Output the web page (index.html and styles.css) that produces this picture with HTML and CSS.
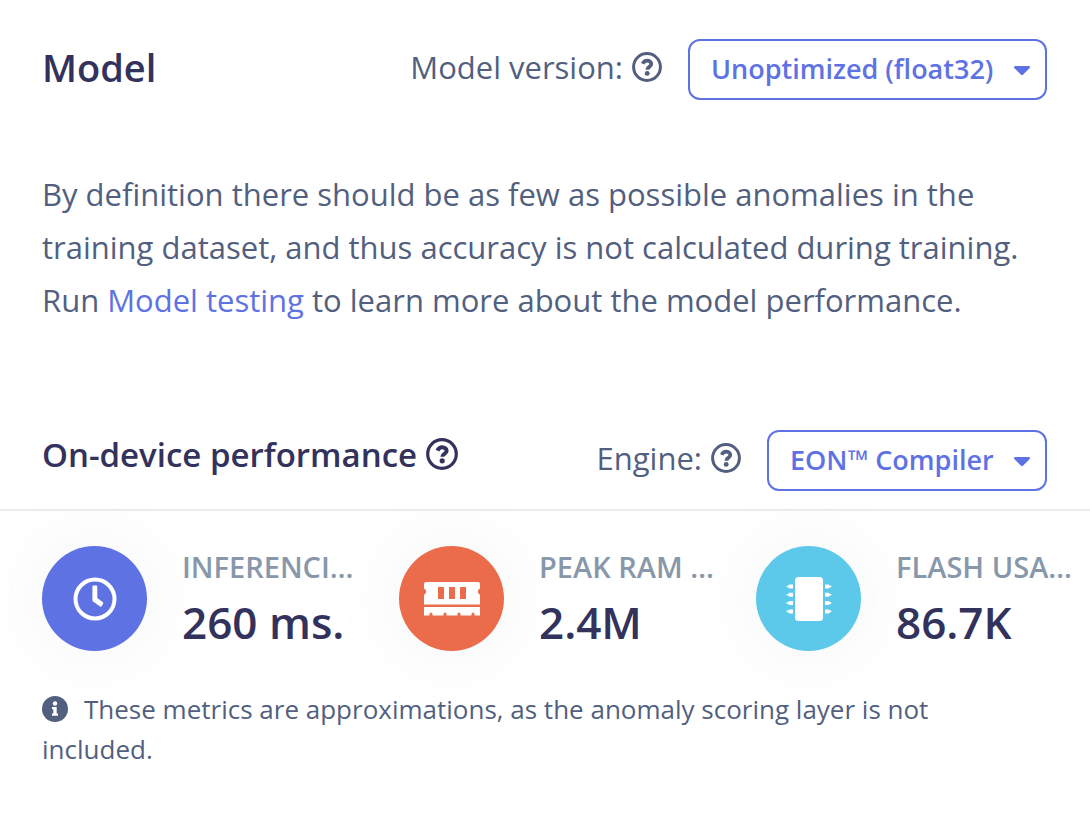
FILE: index.html
```html
<!DOCTYPE html>
<html lang="en">
<head>
  <meta charset="UTF-8" />
  <meta name="viewport" content="width=device-width, initial-scale=1.0"/>
  <title>Model</title>
  <link rel="stylesheet" href="styles.css">
</head>
<body>
  <svg class="defs" width="0" height="0" aria-hidden="true">
    <symbol id="question" viewBox="0 0 32 32">
      <circle cx="16" cy="16" r="14.3" fill="none" stroke="currentColor" stroke-width="3.2"/>
      <path d="M11.4 12.6C12.5 10.2 14 9.2 16.2 9.2C18.8 9.2 20.6 10.8 20.6 12.9C20.6 16 16.3 15.8 16.3 18.8" fill="none" stroke="currentColor" stroke-width="4"/>
      <circle cx="16.2" cy="22.8" r="2.6" fill="currentColor"/>
    </symbol>
    <symbol id="caret" viewBox="0 0 16 10">
      <path d="M1.4 0H14.6C15.9 0 16.4 1.3 15.5 2.2L9.2 8.6C8.5 9.3 7.5 9.3 6.8 8.6L.5 2.2C-.4 1.3 .1 0 1.4 0Z" fill="currentColor"/>
    </symbol>
  </svg>

  <header class="card-header">
    <h2 class="title">Model</h2>
    <div class="control">
      <label for="version">Model version:</label>
      <svg class="help"><use href="#question"/></svg>
      <div class="select-wrap">
        <select id="version">
          <option>Unoptimized (float32)</option>
        </select>
        <svg class="caret"><use href="#caret"/></svg>
      </div>
    </div>
  </header>

  <p class="description">By definition there should be as few as possible anomalies in the training dataset, and thus accuracy is not calculated during training. Run <a href="#">Model testing</a> to learn more about the model performance.</p>

  <div class="card-header performance">
    <h3 class="subtitle">On-device performance <svg class="help"><use href="#question"/></svg></h3>
    <div class="control">
      <label for="engine">Engine:</label>
      <svg class="help"><use href="#question"/></svg>
      <div class="select-wrap">
        <select id="engine">
          <option>EON™ Compiler</option>
        </select>
        <svg class="caret"><use href="#caret"/></svg>
      </div>
    </div>
  </div>

  <div class="metrics">
    <div class="metric">
      <div class="icon icon-time">
        <svg width="44" height="44" viewBox="0 0 44 44">
          <circle cx="22" cy="22" r="19.5" fill="none" stroke="#fff" stroke-width="4"/>
          <path d="M19.4 9.5Q19.4 8.5 20.4 8.5H23.3Q24.3 8.5 24.3 9.5V21L29.9 25.3Q30.6 25.9 30.1 26.7L28.6 29.2Q28 30.2 27.1 29.5L20.1 24.5Q19.4 24 19.4 23Z" fill="#fff"/>
        </svg>
      </div>
      <div class="metric-text">
        <div class="label">INFERENCING TIME</div>
        <div class="value">260 ms.</div>
      </div>
    </div>
    <div class="metric">
      <div class="icon icon-ram">
        <svg width="56" height="34" viewBox="0 0 56 34">
          <path fill="#fff" fill-rule="evenodd" d="M2 0H54Q56 0 56 2V6.5A3.3 3.3 0 0 0 56 12.7V22.5H0V12.7A3.3 3.3 0 0 0 0 6.5V2Q0 0 2 0ZM14 5V17H20V5ZM25 5V17H31V5ZM36 5V17H42V5Z"/>
          <path fill="#fff" d="M0 25H56V33.5H50.5V32A1.5 1.5 0 0 0 47.5 32V33.5H36.5V32A1.5 1.5 0 0 0 33.5 32V33.5H22.5V32A1.5 1.5 0 0 0 19.5 32V33.5H8.5V32A1.5 1.5 0 0 0 5.5 32V33.5H0Z"/>
        </svg>
      </div>
      <div class="metric-text">
        <div class="label">PEAK RAM USAGE</div>
        <div class="value">2.4M</div>
      </div>
    </div>
    <div class="metric">
      <div class="icon icon-flash">
        <svg width="46" height="46" viewBox="0 0 46 46" fill="#fff">
          <rect x="9" y="1" width="28" height="44" rx="3.5"/>
          <path id="pins" d="M7 8.5V12.5H3.5L2 11.3H.7V9.7H2L3.5 8.5ZM7 16.8V20.8H3.5L2 19.6H.7V18H2L3.5 16.8ZM7 25.1V29.1H3.5L2 27.9H.7V26.3H2L3.5 25.1ZM7 33.4V37.4H3.5L2 36.2H.7V34.6H2L3.5 33.4Z"/>
          <use href="#pins" transform="translate(46 0) scale(-1 1)"/>
        </svg>
      </div>
      <div class="metric-text">
        <div class="label">FLASH USAGE</div>
        <div class="value">86.7K</div>
      </div>
    </div>
  </div>

  <p class="note"><svg class="info" viewBox="0 0 26 26"><circle cx="13" cy="13" r="13" fill="currentColor"/><circle cx="13" cy="7.5" r="2.2" fill="#fff"/><path d="M10 11H14.7V17.5H16V19.8H10V17.5H11.3V13.3H10Z" fill="#fff"/></svg>These metrics are approximations, as the anomaly scoring layer is not included.</p>
</body>
</html>
```

FILE: styles.css
```css
body {
  font-family: "Open Sans", sans-serif;
  margin: 0;
  background: #fff;
  color: #525f7f;
  font-size: 31px;
}
.defs {
  position: absolute;
}
.card-header {
  display: flex;
  align-items: center;
  justify-content: space-between;
  padding: 39px 43px 0 42px;
}
.title, .subtitle {
  margin: 0;
  color: #32325d;
  font-weight: 600;
}
.title {
  font-size: 38px;
  line-height: 52px;
  padding-bottom: 6px;
}
.subtitle {
  font-size: 33px;
  line-height: 48px;
  padding-bottom: 12px;
}
.control {
  display: flex;
  align-items: center;
}
.control label,
.control .help {
  margin-bottom: 5px;
}
.help {
  width: 30px;
  height: 30px;
  margin-left: 9px;
}
.subtitle .help {
  width: 32px;
  height: 32px;
  margin-left: 0;
  vertical-align: -3px;
}
.select-wrap {
  position: relative;
  margin-left: 26px;
}
select {
  display: block;
  appearance: none;
  box-sizing: border-box;
  height: 61px;
  padding: 0 51px 2px 21px;
  border: 2px solid #5e72e4;
  border-radius: 12px;
  background: #fff;
  color: #5e72e4;
  font-family: inherit;
  font-size: 27px;
  font-weight: 600;
  cursor: pointer;
}
.caret {
  position: absolute;
  right: 17px;
  top: 27px;
  width: 16px;
  height: 10px;
  color: #5e72e4;
  pointer-events: none;
}
.description {
  margin: 68px 42px 103px;
  line-height: 53px;
}
a {
  color: #5e72e4;
  text-decoration: none;
}
.performance {
  padding-top: 0;
  padding-bottom: 18px;
  border-bottom: 2px solid #e9ecef;
}
.metrics {
  display: grid;
  grid-template-columns: repeat(3, minmax(0, 1fr));
  gap: 38px;
  padding: 35px 15px 0 42px;
}
.metric {
  display: flex;
  gap: 35px;
}
.icon {
  display: flex;
  align-items: center;
  justify-content: center;
  flex: none;
  width: 105px;
  height: 105px;
  border-radius: 50%;
  box-shadow: 0 0 70px rgba(136, 152, 170, 0.1);
}
.icon-time {
  background: #5e72e4;
}
.icon-ram {
  background: #ea6c4b;
}
.icon-flash {
  background: #5dc9ea;
}
.metric-text {
  min-width: 0;
}
.label {
  overflow: hidden;
  text-overflow: ellipsis;
  white-space: nowrap;
  color: #8898aa;
  font-size: 29px;
  font-weight: 600;
  line-height: 42px;
}
.value {
  color: #32325d;
  font-size: 44px;
  font-weight: 600;
  line-height: 68px;
}
.note {
  margin: 33px 60px 33px 42px;
  font-size: 26px;
  line-height: 40px;
}
.info {
  width: 26px;
  height: 26px;
  margin-right: 16px;
  vertical-align: -3px;
}
```
